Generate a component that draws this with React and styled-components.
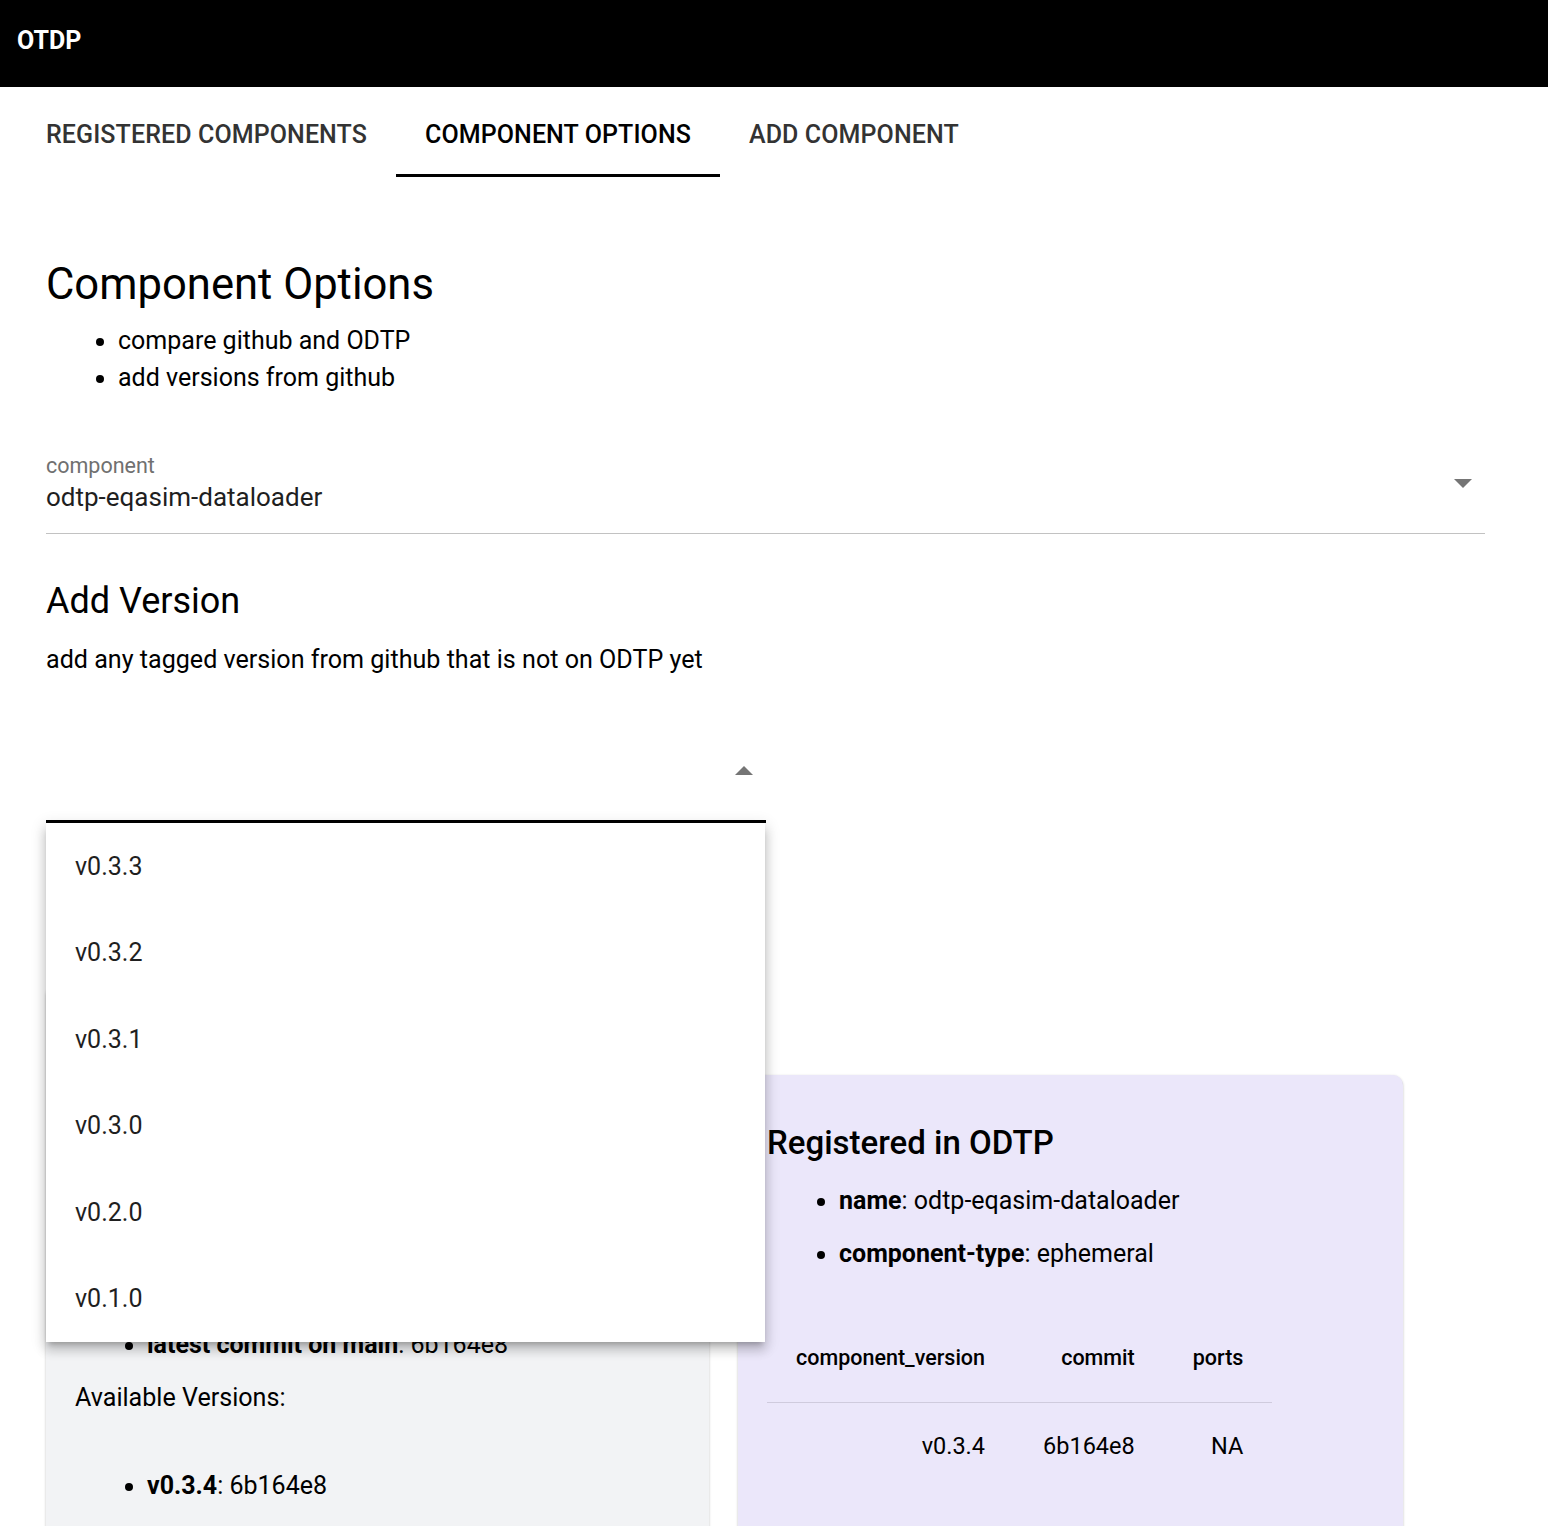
import React from 'react'
import styled, { createGlobalStyle } from 'styled-components'

const GlobalStyle = createGlobalStyle`
  body {
    margin: 0;
    background: #fff;
    font-family: Roboto, "Liberation Sans", sans-serif;
    color: #000;
  }
  * { box-sizing: border-box; }
`

const TopBar = styled.header`
  display: flex;
  align-items: center;
  height: 87px;
  padding: 0 17px 6px;
  background: #000;
`

const Brand = styled.div`
  color: #fff;
  font-size: 25px;
  font-weight: 700;
`

const TabBar = styled.nav`
  display: flex;
  height: 90px;
  padding-left: 17px;
`

const Tab = styled.div`
  display: flex;
  align-items: center;
  padding: 7px 29px 0;
  font-size: 25px;
  font-weight: 500;
  letter-spacing: 0.1px;
  color: ${(p) => (p.$active ? '#000' : '#333')};
  border-bottom: 3px solid ${(p) => (p.$active ? '#000' : 'transparent')};
`

const Main = styled.main`
  padding: 0 63px 0 46px;
`

const PageTitle = styled.h1`
  margin: 82px 0 0;
  font-size: 43.6px;
  font-weight: 400;
  line-height: 52px;
`

const BulletList = styled.ul`
  margin: ${(p) => p.$margin || '0'};
  padding-left: 72px;
  font-size: 25px;
  line-height: 37px;
`

const CardList = styled.ul`
  margin: ${(p) => p.$margin || '0'};
  padding-left: 72px;
  font-size: 25px;
  line-height: 36px;

  li { margin-bottom: 17px; }
  li:last-child { margin-bottom: 0; }
`

const SelectField = styled.div`
  display: flex;
  align-items: center;
  width: ${(p) => p.$width || '100%'};
  margin-top: ${(p) => p.$top || '0'};
  padding-bottom: 20px;
  border-bottom: ${(p) => (p.$focused ? '3px solid #000' : '1px solid #c2c2c2')};
`

const FieldBody = styled.div`
  flex: 1;
  display: flex;
  flex-direction: column;
  min-height: 59px;
`

const FieldLabel = styled.div`
  font-size: 21.5px;
  line-height: 23px;
  color: #707070;
  height: 23px;
`

const FieldValue = styled.div`
  font-size: 26px;
  line-height: 36px;
  color: #1f1f1f;
  height: 36px;
  padding-top: 2px;
`

const Caret = styled.svg`
  width: 18px;
  height: 9px;
  margin-right: 13px;
  fill: #757575;
  transform: ${(p) => (p.$up ? 'rotate(180deg)' : 'none')};
`

const SectionTitle = styled.h2`
  margin: 47px 0 0;
  font-size: 36px;
  font-weight: 400;
  line-height: 40px;
`

const Paragraph = styled.p`
  margin: ${(p) => p.$margin || '0'};
  font-size: 25.1px;
  line-height: 36px;
`

const SelectAnchor = styled.div`
  position: relative;
  width: 720px;
`

const Menu = styled.div`
  position: absolute;
  top: 100%;
  left: 0;
  right: 1px;
  z-index: 10;
  background: #fff;
  box-shadow: 0 5px 5px -3px rgba(0, 0, 0, 0.2), 0 8px 10px 1px rgba(0, 0, 0, 0.14),
    0 3px 14px 2px rgba(0, 0, 0, 0.12);
`

const MenuItem = styled.div`
  display: flex;
  align-items: center;
  height: 86.5px;
  padding-left: 29px;
  font-size: 25px;
  color: #1f1f1f;
`

const CardRow = styled.div`
  display: flex;
  align-items: flex-start;
  gap: 29px;
  margin-top: 162px;
`

const Card = styled.section`
  width: ${(p) => p.$width};
  margin-top: ${(p) => p.$offset || '0'};
  padding: 0 29px 80px;
  border-radius: 10px;
  background: ${(p) => (p.$tone === 'odtp' ? '#ebe7fa' : '#f2f3f5')};
  box-shadow: 0 1px 3px rgba(0, 0, 0, 0.2), 0 1px 1px rgba(0, 0, 0, 0.14);
`

const CardTitle = styled.h3`
  margin: 48px 0 20px;
  font-size: 33px;
  font-weight: 500;
  line-height: 40px;
`

const Table = styled.table`
  margin-top: 42px;
  border-collapse: collapse;
  font-size: 23.5px;

  th, td {
    padding: 0 29px;
    height: 88px;
    text-align: right;
  }

  th {
    font-size: 21.5px;
    font-weight: 500;
    border-bottom: 1px solid #cfcbdd;
  }
`

const versions = ['v0.3.3', 'v0.3.2', 'v0.3.1', 'v0.3.0', 'v0.2.0', 'v0.1.0']

function CaretIcon({ up }) {
  return (
    <Caret $up={up} viewBox="0 0 18 9">
      <polygon points="0,0 18,0 9,9" />
    </Caret>
  )
}

export default function App() {
  return (
    <>
      <GlobalStyle />
      <TopBar>
        <Brand>OTDP</Brand>
      </TopBar>
      <TabBar>
        <Tab>REGISTERED COMPONENTS</Tab>
        <Tab $active>COMPONENT OPTIONS</Tab>
        <Tab>ADD COMPONENT</Tab>
      </TabBar>
      <Main>
        <PageTitle>Component Options</PageTitle>
        <BulletList $margin="11px 0 0">
          <li>compare github and ODTP</li>
          <li>add versions from github</li>
        </BulletList>

        <SelectField $top="58px">
          <FieldBody>
            <FieldLabel>component</FieldLabel>
            <FieldValue>odtp-eqasim-dataloader</FieldValue>
          </FieldBody>
          <CaretIcon />
        </SelectField>

        <SectionTitle>Add Version</SectionTitle>
        <Paragraph $margin="21px 0 0">add any tagged version from github that is not on ODTP yet</Paragraph>

        <SelectAnchor>
          <SelectField $focused $top="63px">
            <FieldBody>
              <FieldLabel />
              <FieldValue />
            </FieldBody>
            <CaretIcon up />
          </SelectField>
          <Menu>
            {versions.map((v) => (
              <MenuItem key={v}>{v}</MenuItem>
            ))}
          </Menu>
        </SelectAnchor>

        <CardRow>
          <Card $width="663px">
            <CardTitle>Available on Github</CardTitle>
            <CardList $margin="42px 0 0">
              <li><b>repository</b>: odtp-eqasim-dataloader</li>
              <li><b>owner</b>: odtp-org</li>
              <li><b>visibility</b>: public</li>
              <li><b>latest tag</b>: v0.3.4</li>
              <li><b>latest commit on main</b>: 6b164e8</li>
            </CardList>
            <Paragraph $margin="17px 0 0">Available Versions:</Paragraph>
            <CardList $margin="52px 0 0">
              <li><b>v0.3.4</b>: 6b164e8</li>
              <li><b>v0.3.3</b>: 2a91c07</li>
            </CardList>
          </Card>

          <Card $width="665px" $tone="odtp" $offset="90px">
            <CardTitle>Registered in ODTP</CardTitle>
            <CardList>
              <li><b>name</b>: odtp-eqasim-dataloader</li>
              <li><b>component-type</b>: ephemeral</li>
            </CardList>
            <Table>
              <thead>
                <tr>
                  <th>component_version</th>
                  <th>commit</th>
                  <th>ports</th>
                </tr>
              </thead>
              <tbody>
                <tr>
                  <td>v0.3.4</td>
                  <td>6b164e8</td>
                  <td>NA</td>
                </tr>
              </tbody>
            </Table>
          </Card>
        </CardRow>
      </Main>
    </>
  )
}
